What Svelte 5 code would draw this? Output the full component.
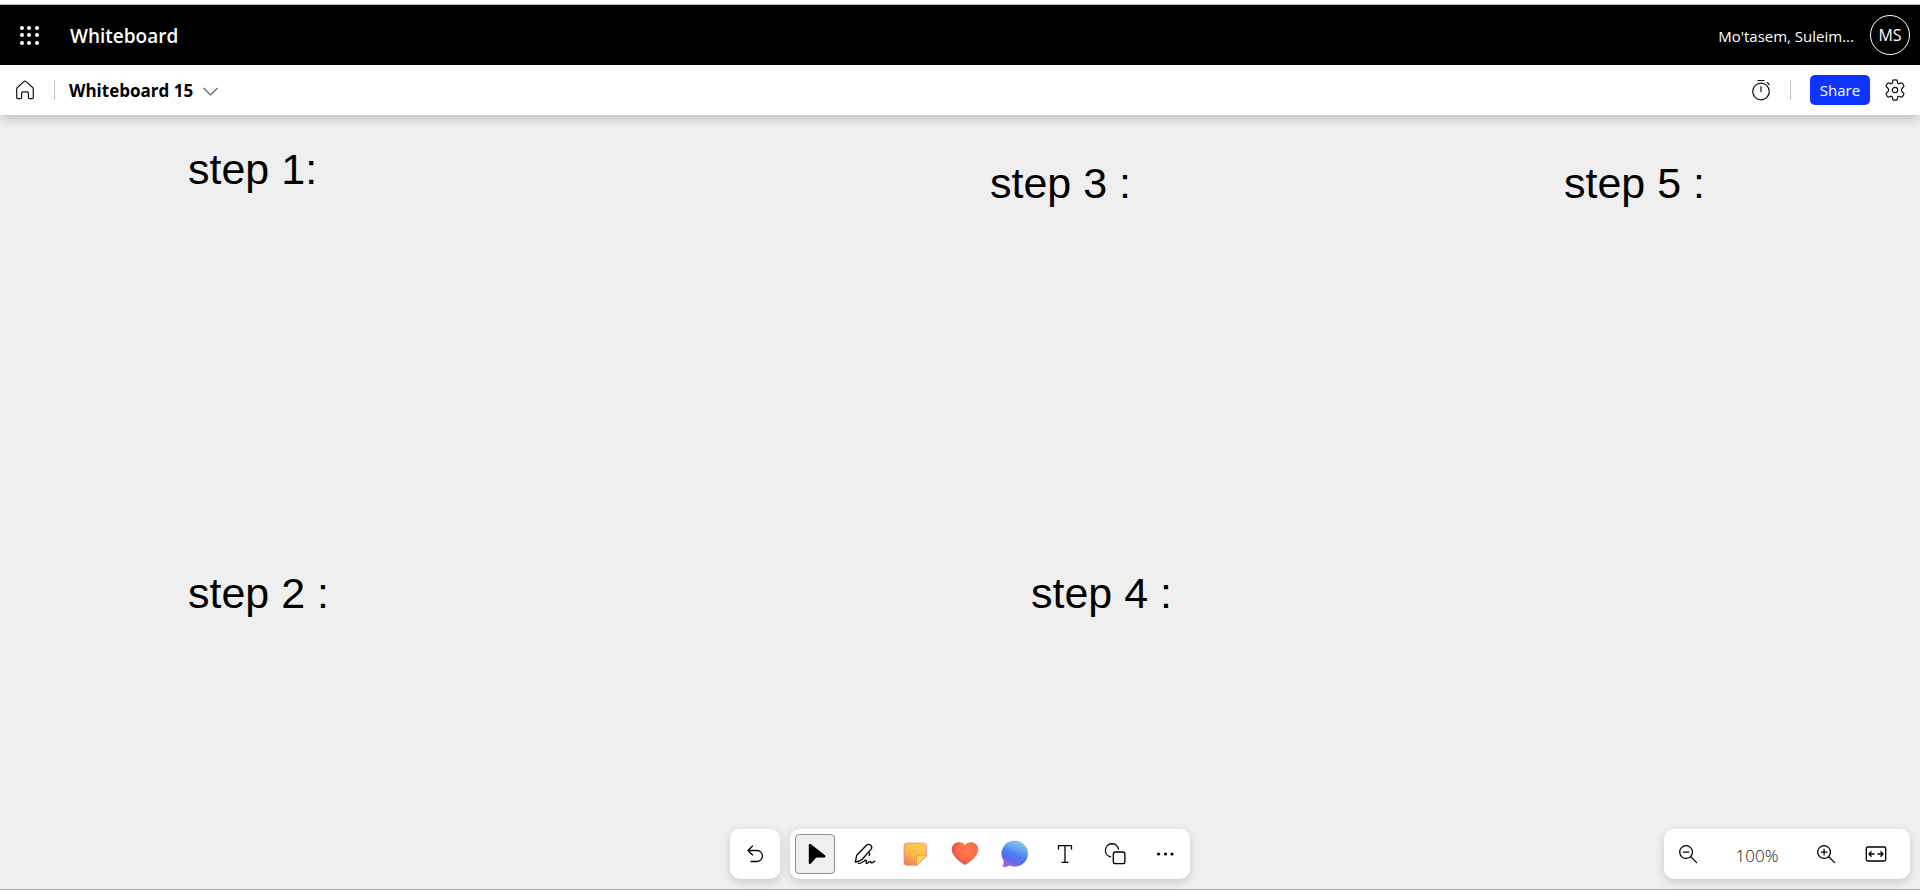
<script>
  const notes = [
    { text: 'step 1:', x: 188, y: 30 },
    { text: 'step 2 :', x: 188, y: 454 },
    { text: 'step 3 :', x: 990, y: 44 },
    { text: 'step 4 :', x: 1031, y: 454 },
    { text: 'step 5 :', x: 1564, y: 44 }
  ];
  const dots = [2, 9, 17];
  let selected = $state('Select');
</script>

{#snippet magnifier()}
  <circle cx="8.500" cy="8.500" r="6.700" />
  <path d="M13.400 13.400L19.500 19.500M5.500 8.500h6" />
{/snippet}

<div class="app">
  <header class="suite">
    <button class="icon waffle" aria-label="App launcher">
      <svg width="19" height="19" viewBox="0 0 19 19" fill="#fff">
        {#each dots as y}
          {#each dots as x}<circle cx={x} cy={y} r="2" />{/each}
        {/each}
      </svg>
    </button>
    <span class="product">Whiteboard</span>
    <span class="user">Mo'tasem, Suleim...</span>
    <button class="avatar" aria-label="Account">MS</button>
  </header>

  <nav class="bar">
    <button class="icon home" aria-label="Home">
      <svg class="line" width="20" height="20" viewBox="0 0 20 20">
        <path d="M1.700 9.200c0-.8.3-1.400.9-1.900L8.900 1.600c.6-.6 1.600-.6 2.200 0l6.300 5.700c.6.5.9 1.100.9 1.900v8.300c0 .7-.5 1.200-1.200 1.200h-2.500c-.7 0-1.200-.5-1.200-1.200v-4.300c0-.8-.6-1.400-1.400-1.400H8c-.8 0-1.400.6-1.400 1.400v4.300c0 .7-.5 1.200-1.200 1.200H2.900c-.7 0-1.200-.5-1.200-1.200z" />
      </svg>
    </button>
    <span class="sep"></span>
    <button class="board">
      Whiteboard 15
      <svg width="15" height="9" viewBox="0 0 15 9" fill="none" stroke="#616161" stroke-width="1.200"><path d="M.5 1l7 7 7-7" /></svg>
    </button>
    <button class="icon timer" aria-label="Timer">
      <svg class="line" width="20" height="22" viewBox="0 0 20 22">
        <circle cx="10" cy="12.500" r="8.300" />
        <path d="M10 7.500v5M7 1.500h6M16.200 3.500l2 2" />
      </svg>
    </button>
    <span class="sep"></span>
    <button class="share">Share</button>
    <button class="icon gear" aria-label="Settings">
      <svg class="line" width="22" height="22" viewBox="0 0 22 22">
        <path d="M8.900 1.200Q11 .6 13.100 1.200L13.600 3.800Q14 5 15.300 4.600L17.900 3.800Q19.500 5.400 20 7.400L18.100 9.200Q16.800 11 18.100 12.800L20 14.600Q19.500 16.600 17.900 18.200L15.300 17.400Q14 17 13.600 18.200L13.100 20.800Q11 21.400 8.900 20.800L8.400 18.200Q8 17 6.700 17.400L4.100 18.200Q2.500 16.600 2 14.600L3.900 12.800Q5.200 11 3.900 9.200L2 7.400Q2.500 5.400 4.100 3.800L6.700 4.600Q8 5 8.400 3.800Z" />
        <circle cx="11" cy="11" r="2.700" />
      </svg>
    </button>
  </nav>

  <main class="canvas">
    {#each notes as note}
      <div class="note" style="left: {note.x}px; top: {note.y}px">{note.text}</div>
    {/each}

    <div class="dock">
      <div class="tools">
        <div class="panel">
          <button class="tool" aria-label="Undo">
            <svg class="line bold" width="20" height="20" viewBox="0 0 20 20">
              <path d="M7.500 2L3 6.500 7.500 11M3.300 6.500h8.700a5.500 5.500 0 0 1 0 11H6" />
            </svg>
          </button>
        </div>
        <div class="panel group">
          <button class="tool" class:selected={selected === 'Select'} aria-label="Select" onclick={() => (selected = 'Select')}>
            <svg width="22" height="22" viewBox="0 0 22 22"><path d="M4.800 2.200c0-1.100 1.300-1.700 2.200-1L21 12.200c1 .8.400 2.400-.9 2.400h-6.600c-.9 0-1.600.3-2.200 1l-4.300 5c-.8.9-2.200.4-2.200-.8z" /></svg>
          </button>
          <button class="tool" aria-label="Ink" onclick={() => (selected = 'Ink')}>
            <svg class="line bold" width="22" height="22" viewBox="0 0 22 22">
              <path d="M1.400 19.200L2.700 12.200 12.200 2.500C14.900-.1 19.500 3 17 6.400L8.200 16.300C6.900 17.500 3.900 18.700 1.400 19.200zM14.400 9.400c1.600.7 1.700 2 .6 3.200" />
              <path d="M4.200 20.400c3.900.4 6.100-3.700 7.900-3.100 1.500.7-1.100 2.900.5 3.100 1.400.1 2.200-2 3.600-1.700 1.100.3.500 1.300 1.700 1.200 1.100-.1 1.600-1.200 2.900-1.800" />
            </svg>
          </button>
          <button class="tool" aria-label="Notes" onclick={() => (selected = 'Notes')}>
            <svg width="24" height="24" viewBox="0 0 24 24">
              <defs>
                <linearGradient id="paper" x1=".7" y1="0" x2=".2" y2="1"><stop offset="0" stop-color="#ffcb45" /><stop offset=".55" stop-color="#fdb54a" /><stop offset="1" stop-color="#f17a62" /></linearGradient>
                <linearGradient id="edge" x1="0" y1="0" x2="1" y2="1"><stop offset="0" stop-color="#e58b83" /><stop offset="1" stop-color="#e38bc5" /></linearGradient>
                <linearGradient id="fold" x1="0" y1="0" x2=".7" y2=".7"><stop offset="0" stop-color="#ffe75e" /><stop offset="1" stop-color="#ffd05a" /></linearGradient>
              </defs>
              <path d="M4 1h16.500a3 3 0 0 1 3 3v10L14 23.300H4a3 3 0 0 1-3-3V4a3 3 0 0 1 3-3z" fill="url(#paper)" stroke="url(#edge)" stroke-width=".8" />
              <path d="M13.500 23.300V16a2.300 2.300 0 0 1 2.300-2.300h7.700z" fill="url(#fold)" stroke="#e98d51" stroke-width=".8" />
            </svg>
          </button>
          <button class="tool" aria-label="Reactions" onclick={() => (selected = 'Reactions')}>
            <svg width="28" height="26" viewBox="0 0 28 26">
              <defs><radialGradient id="heart" cx=".62" cy=".38" r=".7"><stop offset="0" stop-color="#ff7a49" /><stop offset=".55" stop-color="#fb7047" /><stop offset="1" stop-color="#d34450" /></radialGradient></defs>
              <path d="M14 4.200C17-.6 27 .3 27.200 8.500c.1 7-9.200 13.300-12.200 15.100q-1 .5-2 0C10 21.800.7 15.500.8 8.500 1 .3 11-.6 14 4.200z" fill="url(#heart)" />
            </svg>
          </button>
          <button class="tool" aria-label="Comment" onclick={() => (selected = 'Comment')}>
            <svg width="28" height="28" viewBox="0 0 28 28">
              <defs><linearGradient id="bubble" x1=".75" y1="0" x2=".35" y2="1"><stop offset="0" stop-color="#89d4ec" /><stop offset=".55" stop-color="#4d7cf5" /><stop offset=".78" stop-color="#6268ef" /><stop offset="1" stop-color="#b05bdd" /></linearGradient></defs>
              <path d="M14 1a12.700 12.700 0 1 1-5.300 24.200c-2 1.500-4.500 1.800-6.500 1.400-.7-.2-.8-.8-.3-1.300.9-1.200 1-2.500.9-4.500A12.700 12.700 0 0 1 14 1z" fill="url(#bubble)" stroke="#5275c4" stroke-opacity=".5" stroke-width=".6" />
            </svg>
          </button>
          <button class="tool" aria-label="Text" onclick={() => (selected = 'Text')}>
            <svg class="line bold" width="20" height="20" viewBox="0 0 20 20"><path d="M3.500 5V1.700h13V5M10 1.700v16.600M7 18.300h6" /></svg>
          </button>
          <button class="tool" aria-label="Shapes" onclick={() => (selected = 'Shapes')}>
            <svg class="line bold" width="22" height="22" viewBox="0 0 22 22">
              <path d="M6.600 13.800A6.600 6.600 0 1 1 14.500 6" />
              <rect x="9.300" y="9" width="11.600" height="11.600" rx="2.200" />
            </svg>
          </button>
          <button class="tool" aria-label="More">
            <svg width="18" height="4" viewBox="0 0 18 4"><circle cx="2.500" cy="2" r="1.600" /><circle cx="9.500" cy="2" r="1.600" /><circle cx="16" cy="2" r="1.600" /></svg>
          </button>
        </div>
      </div>
      <div class="panel zoom">
        <button class="tool" aria-label="Zoom out">
          <svg class="line bold" width="20" height="20" viewBox="0 0 21 21">{@render magnifier()}</svg>
        </button>
        <button class="level">100%</button>
        <button class="tool" aria-label="Zoom in">
          <svg class="line bold" width="20" height="20" viewBox="0 0 21 21">{@render magnifier()}<path d="M8.500 5.500v6" /></svg>
        </button>
        <button class="tool fit" aria-label="Fit to screen">
          <svg class="line bold" width="22" height="16" viewBox="0 0 22 16">
            <rect x="1.300" y="1" width="19.400" height="14" rx="1.500" />
            <path d="M9 8H4M6.200 5.800L4 8l2.200 2.200M13 8h5M15.800 5.800L18 8l-2.200 2.200" />
          </svg>
        </button>
      </div>
    </div>
  </main>
</div>

<style>
  :global(body) {
    margin: 0;
  }
  .app {
    display: flex;
    flex-direction: column;
    box-sizing: border-box;
    min-height: 100vh;
    padding-top: 4px;
    background: #fff;
    color: #000;
    font-family: 'Segoe UI', 'Open Sans', 'Noto Sans', sans-serif;
  }
  button {
    display: flex;
    align-items: center;
    justify-content: center;
    box-sizing: border-box;
    margin: 0;
    padding: 0;
    border: 0;
    background: none;
    color: inherit;
    font: inherit;
  }
  svg {
    display: block;
    flex: none;
  }
  .line {
    fill: none;
    stroke: #111;
    stroke-width: 1.2;
    stroke-linecap: round;
    stroke-linejoin: round;
  }
  .bold {
    stroke: #000;
    stroke-width: 1.3;
  }
  .suite {
    display: flex;
    align-items: center;
    height: 60px;
    padding: 0 10px 0 9px;
    border-top: 1px solid #bbb;
    background: #000;
    color: #fff;
  }
  .icon {
    width: 40px;
    height: 40px;
  }
  .product {
    margin-left: 21px;
    padding-top: 1px;
    font-size: 19px;
    font-weight: 600;
    line-height: 24px;
  }
  .user {
    margin-left: auto;
    margin-right: 16px;
    padding-top: 2px;
    font-size: 15px;
    line-height: 20px;
  }
  .avatar {
    width: 40px;
    height: 40px;
    border: 1px solid #fff;
    border-radius: 50%;
    font-size: 16px;
  }
  .bar {
    position: relative;
    z-index: 1;
    display: flex;
    align-items: center;
    height: 50px;
    padding: 0 5px;
    background: #fff;
    box-shadow: 0 2px 12px rgba(0, 0, 0, 0.26);
  }
  .sep {
    width: 1px;
    height: 20px;
    margin: 0 9px;
    background: #c4c4c4;
  }
  .board {
    gap: 10px;
    margin-left: 5px;
    padding-top: 2px;
    font-size: 17px;
    font-weight: 700;
    line-height: 24px;
  }
  .timer {
    margin-left: auto;
  }
  .share {
    width: 60px;
    height: 30px;
    margin-left: 10px;
    border-radius: 5px;
    background: #0f34ff;
    color: #fff;
    font-size: 15px;
  }
  .gear {
    margin-left: 5px;
  }
  .canvas {
    position: relative;
    display: flex;
    flex: 1;
    flex-direction: column;
    justify-content: flex-end;
    overflow: hidden;
    border-bottom: 1px solid #a8a8ac;
    background: #efefef;
  }
  .note {
    position: absolute;
    font-family: Arial, 'Liberation Sans', sans-serif;
    font-size: 43px;
    line-height: 48px;
    white-space: pre;
  }
  .dock {
    display: grid;
    grid-template-columns: 1fr auto 1fr;
    padding: 10px;
  }
  .tools {
    display: flex;
    grid-column: 2;
    gap: 10px;
  }
  .panel {
    display: flex;
    padding: 5px;
    border-radius: 10px;
    background: #fff;
    box-shadow: 0 3px 10px rgba(0, 0, 0, 0.16);
  }
  .group {
    gap: 10px;
  }
  .tool {
    width: 40px;
    height: 40px;
    border-radius: 4px;
  }
  .selected {
    border: 1px solid #8f8f8f;
    background: #efefef;
  }
  .zoom {
    justify-self: end;
    padding-left: 4px;
    padding-right: 14px;
  }
  .level {
    width: 98px;
    padding-top: 2px;
    color: #111;
    font-size: 17px;
    font-weight: 300;
  }
  .fit {
    margin-left: 10px;
  }
</style>
